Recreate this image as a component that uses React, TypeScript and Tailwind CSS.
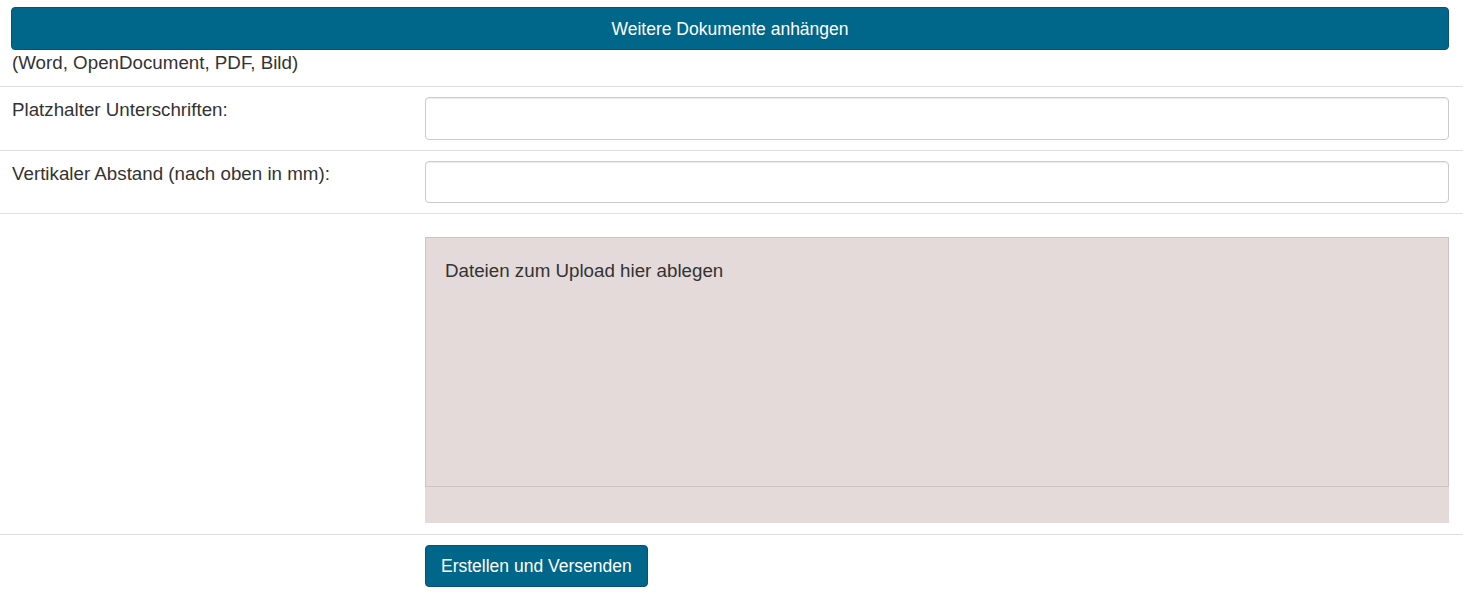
export default function App() {
  return (
    <div className="min-h-screen bg-white text-[18.75px] leading-[24px] text-[#333] [font-family:'Liberation_Sans',Arial,sans-serif]">
      <div className="pt-[7px] pb-[11px] pl-[11px] pr-[14px]">
        <button
          type="button"
          className="h-[43px] w-full rounded-[4px] border border-[#0b4f7c] bg-[#00668a] text-[17.5px] text-white"
        >
          Weitere Dokumente anhängen
        </button>
        <div className="pl-[1px] pt-[1px]">(Word, OpenDocument, PDF, Bild)</div>
      </div>

      <FormRow label="Platzhalter Unterschriften:">
        <input
          type="text"
          className="h-[43px] w-full rounded-[4px] border border-[#ccc] bg-white px-3 shadow-[inset_0_1px_1px_rgba(0,0,0,0.075)] outline-none"
        />
      </FormRow>

      <FormRow label="Vertikaler Abstand (nach oben in mm):">
        <input
          type="text"
          className="h-[42px] w-full rounded-[4px] border border-[#ccc] bg-white px-3 shadow-[inset_0_1px_1px_rgba(0,0,0,0.075)] outline-none"
        />
      </FormRow>

      <div className="flex border-t border-[#ddd] pt-[23px] pb-[11px]">
        <div className="w-[425px] shrink-0" />
        <div className="flex-1 pr-[14px]">
          <div className="flex h-[286px] flex-col bg-[#e3dad9]">
            <div className="h-[250px] border border-[#cdc3c2] px-[19px] pt-[21px]">
              Dateien zum Upload hier ablegen
            </div>
          </div>
        </div>
      </div>

      <div className="flex border-t border-[#ddd] pt-[10px] pb-[14px]">
        <div className="w-[425px] shrink-0" />
        <button
          type="button"
          className="h-[42px] rounded-[4px] border border-[#0b4f7c] bg-[#00668a] px-[15px] text-[17.5px] text-white"
        >
          Erstellen und Versenden
        </button>
      </div>
    </div>
  );
}

function FormRow({ label, children }: { label: string; children: React.ReactNode }) {
  return (
    <div className="flex border-t border-[#ddd] py-[10px]">
      <label className="w-[425px] shrink-0 pl-[12px] pt-[1px]">{label}</label>
      <div className="flex-1 pr-[14px]">{children}</div>
    </div>
  );
}
